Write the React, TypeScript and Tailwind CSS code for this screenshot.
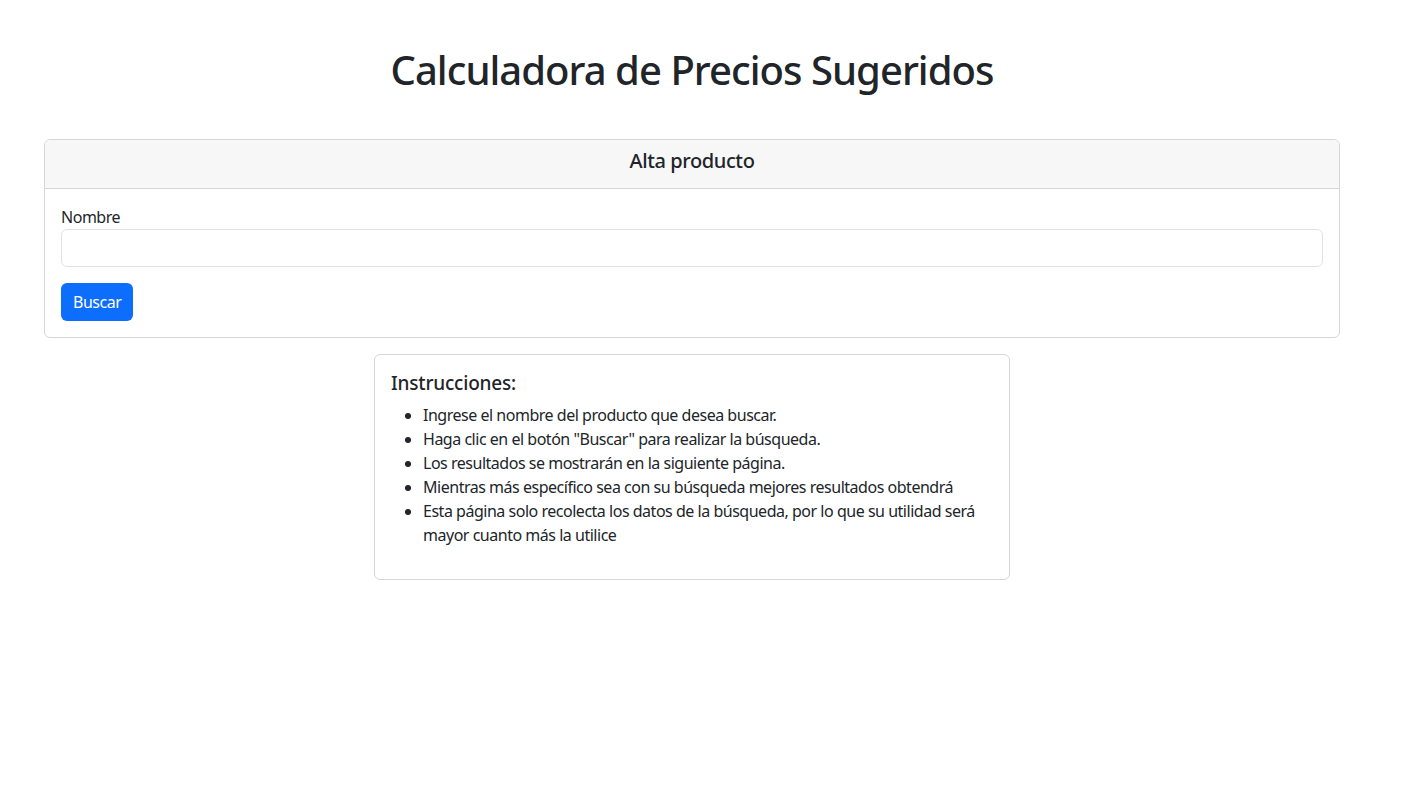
export default function App() {
  const instrucciones = [
    "Ingrese el nombre del producto que desea buscar.",
    'Haga clic en el botón "Buscar" para realizar la búsqueda.',
    "Los resultados se mostrarán en la siguiente página.",
    "Mientras más específico sea con su búsqueda mejores resultados obtendrá",
    "Esta página solo recolecta los datos de la búsqueda, por lo que su utilidad será mayor cuanto más la utilice",
  ];

  return (
    <div
      className="min-h-[798px] bg-white text-[#212529] text-base leading-6 tracking-[-0.03em]"
      style={{ fontFamily: '"Noto Sans", "Open Sans", sans-serif' }}
    >
      <div className="ml-[44px] w-[1296px] pt-[46px]">
        <h1 className="text-center text-[40px] leading-[48px] font-medium tracking-[-0.024em] mb-[45px]">
          Calculadora de Precios Sugeridos
        </h1>

        {/* Alta producto */}
        <div className="border border-[#d5d6d7] rounded-md overflow-hidden">
          <div className="bg-[#f7f7f7] border-b border-[#d5d6d7] px-4 pt-[9px] pb-[15px]">
            <h5 className="text-center text-[20px] leading-6 font-medium tracking-[-0.02em]">Alta producto</h5>
          </div>
          <div className="p-4">
            <label className="block">Nombre</label>
            <input
              type="text"
              className="block w-full h-[38px] border border-[#dee2e6] rounded-md px-3 mb-4 outline-none"
            />
            <button className="h-[38px] px-3 bg-[#0d6efd] text-white rounded-md">Buscar</button>
          </div>
        </div>

        {/* Instrucciones */}
        <div className="mt-4 mx-auto w-[636px] border border-[#d5d6d7] rounded-md p-4">
          <h5 className="text-[19px] leading-6 font-medium tracking-[-0.01em] mb-2">Instrucciones:</h5>
          <ul className="list-disc pl-8 mb-4">
            {instrucciones.map((t) => (
              <li key={t}>{t}</li>
            ))}
          </ul>
        </div>
      </div>
    </div>
  );
}
